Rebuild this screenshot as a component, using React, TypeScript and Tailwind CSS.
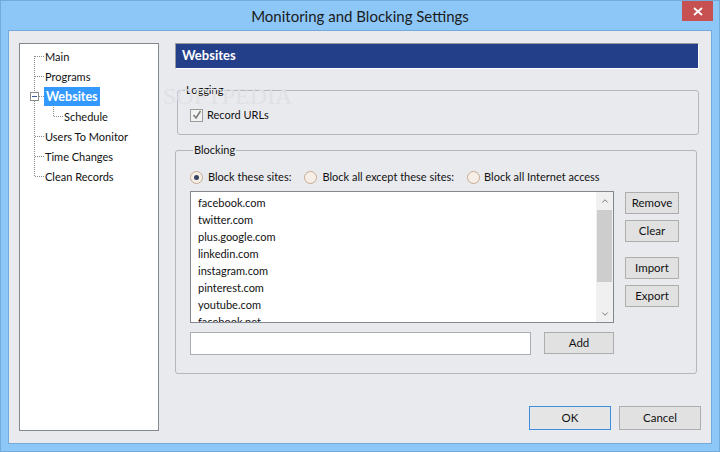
import { ChevronUp, ChevronDown } from 'lucide-react';

const sites = [
    'facebook.com',
    'twitter.com',
    'plus.google.com',
    'linkedin.com',
    'instagram.com',
    'pinterest.com',
    'youtube.com',
    'facebook.net',
];

const treeItems = [
    { label: 'Main', indent: 'ml-[24px]' },
    { label: 'Programs', indent: 'ml-[24px]' },
    { label: 'Websites', indent: 'ml-[24px]', selected: true },
    { label: 'Schedule', indent: 'ml-[43px]' },
    { label: 'Users To Monitor', indent: 'ml-[24px]' },
    { label: 'Time Changes', indent: 'ml-[24px]' },
    { label: 'Clean Records', indent: 'ml-[24px]' },
];

const Button = ({ label, className = '' }: { label: string; className?: string }) => (
    <button className={`h-[22px] border border-[#adadad] bg-[#e1e1e1] text-[11.5px] text-[#111] flex items-center justify-center ${className}`}>
        {label}
    </button>
);

const Radio = ({ checked = false }: { checked?: boolean }) => (
    <span className="w-[13px] h-[13px] rounded-full border border-[#c4ab93] bg-[#f7efe7] flex items-center justify-center shrink-0">
        {checked && <span className="w-[5px] h-[5px] rounded-full bg-[#3a4563]" />}
    </span>
);

// dotted connectors of the tree view
const TreeLines = () => (
    <svg className="absolute left-0 top-0 pointer-events-none" width="60" height="140">
        <g stroke="#8a8a8a" strokeWidth="1" strokeDasharray="1 1" shapeRendering="crispEdges">
            <line x1="14.5" y1="12" x2="14.5" y2="48" />
            <line x1="14.5" y1="57" x2="14.5" y2="133" />
            {[12, 32, 92, 112, 132].map(y => (
                <line key={y} x1="15" y1={y + 0.5} x2="24" y2={y + 0.5} />
            ))}
            <line x1="19" y1="52.5" x2="24" y2="52.5" />
            <line x1="33.5" y1="61" x2="33.5" y2="72" />
            <line x1="34" y1="72.5" x2="43" y2="72.5" />
        </g>
        <rect x="10.5" y="48.5" width="8" height="8" fill="#fff" stroke="#8a8a8a" shapeRendering="crispEdges" />
        <line x1="12" y1="52.5" x2="17" y2="52.5" stroke="#3b5a9a" shapeRendering="crispEdges" />
    </svg>
);

const App = () => {
    return (
        <div className="w-[720px] h-[452px] bg-[#8cc7f8] border border-[#74a9dc] flex flex-col" style={{ fontFamily: 'Lato, "Noto Sans", sans-serif' }}>
            {/* title bar */}
            <div className="h-[29px] relative flex items-center justify-center shrink-0">
                <span className="text-[15px] text-[#1b1b1b] pt-[2px]">Monitoring and Blocking Settings</span>
                <div className="absolute right-[6px] top-0 w-[31px] h-[20px] bg-[#c75050] flex items-center justify-center">
                    <svg width="10" height="9" viewBox="0 0 10 9">
                        <path d="M1 1 L9 8 M9 1 L1 8" stroke="#fff" strokeWidth="1.8" />
                    </svg>
                </div>
            </div>

            {/* client area */}
            <div className="flex-1 mx-[7px] mb-[7px] bg-[#e9eaee] border border-[#74a9dc] flex pl-[10px] pt-[12px] text-[11px] text-[#111]">
                {/* tree */}
                <div className="relative w-[140px] h-[388px] bg-white border border-[#828790] shrink-0">
                    <TreeLines />
                    <div className="pt-[2px] flex flex-col">
                        {treeItems.map(item => (
                            <div key={item.label} className="h-[20px] flex items-center">
                                <span className={`${item.indent} px-[1px] leading-[19px] ${item.selected ? 'bg-[#3399ff] text-white font-bold text-[12.5px] px-[2px]' : ''}`}>
                                    {item.label}
                                </span>
                            </div>
                        ))}
                    </div>
                </div>

                {/* settings page */}
                <div className="relative ml-[16px] w-[524px] flex flex-col">
                    <div className="h-[26px] bg-[#243f8a] border-t border-l border-t-[#9a9a9a] border-l-[#9a9a9a] border-b border-r border-b-white border-r-white flex items-center pl-[6px]">
                        <span className="text-white font-bold text-[13px]">Websites</span>
                    </div>

                    {/* watermark */}
                    <span className="absolute left-[-12px] top-[35px] text-[24px] text-[#e0e1e5] pointer-events-none select-none" style={{ fontFamily: '"Liberation Serif", serif' }}>
                        SOFTPEDIA
                    </span>

                    <fieldset className="mt-[13px] ml-[2px] h-[53px] border border-[#b4b6ba] rounded-[3px] px-[12px]">
                        <legend className="ml-[-5px] px-[1px] leading-[16px]">Logging</legend>
                        <div className="flex items-center mt-[9px]">
                            <span className="w-[13px] h-[13px] border border-[#9c9c9c] bg-[#f2f2f2] flex items-center justify-center">
                                <svg width="10" height="10" viewBox="0 0 10 10">
                                    <path d="M1.5 5 L4 8 L8.5 1" stroke="#7a7a7a" strokeWidth="1.5" fill="none" />
                                </svg>
                            </span>
                            <span className="ml-[4px]">Record URLs</span>
                        </div>
                    </fieldset>

                    <fieldset className="mt-[7px] w-[522px] h-[232px] border border-[#b4b6ba] rounded-[3px] pl-[14px]">
                        <legend className="ml-[3px] px-[1px] leading-[16px]">Blocking</legend>
                        <div className="h-[16px] mt-[11px] flex items-center">
                            <Radio checked />
                            <span className="ml-[5px]">Block these sites:</span>
                            <span className="ml-[13px]"><Radio /></span>
                            <span className="ml-[5px]">Block all except these sites:</span>
                            <span className="ml-[13px]"><Radio /></span>
                            <span className="ml-[4px]">Block all Internet access</span>
                        </div>

                        <div className="flex mt-[6px]">
                            <div className="w-[424px] h-[132px] bg-white border border-[#828790] flex overflow-hidden">
                                <div className="flex-1 pl-[7px] pt-[2px]">
                                    {sites.map(site => (
                                        <div key={site} className="h-[17px] leading-[17px]">{site}</div>
                                    ))}
                                </div>
                                <div className="w-[17px] bg-[#f0f0f0] flex flex-col items-center">
                                    <div className="h-[17px] flex items-center justify-center text-[#606060]">
                                        <ChevronUp size={10} strokeWidth={2} />
                                    </div>
                                    <div className="w-[15px] h-[72px] mt-[1px] bg-[#cdcdcd]" />
                                    <div className="flex-1" />
                                    <div className="h-[17px] flex items-center justify-center text-[#606060]">
                                        <ChevronDown size={10} strokeWidth={2} />
                                    </div>
                                </div>
                            </div>
                            <div className="ml-[11px] mt-[1px] flex flex-col">
                                <Button label="Remove" className="w-[54px]" />
                                <Button label="Clear" className="w-[54px] mt-[6px]" />
                                <Button label="Import" className="w-[54px] mt-[15px]" />
                                <Button label="Export" className="w-[54px] mt-[6px]" />
                            </div>
                        </div>

                        <div className="flex mt-[9px]">
                            <div className="w-[341px] h-[23px] bg-white border border-[#abadb3]" />
                            <Button label="Add" className="w-[70px] ml-[13px]" />
                        </div>
                    </fieldset>

                    <div className="flex justify-end gap-[8px] mt-[32px] mr-[-2px]">
                        <button className="w-[82px] h-[24px] border border-[#3c8fdc] bg-[#e5e5e5] text-[11.5px]">OK</button>
                        <button className="w-[82px] h-[24px] border border-[#adadad] bg-[#e1e1e1] text-[11.5px]">Cancel</button>
                    </div>
                </div>
            </div>
        </div>
    );
};

export default App;
